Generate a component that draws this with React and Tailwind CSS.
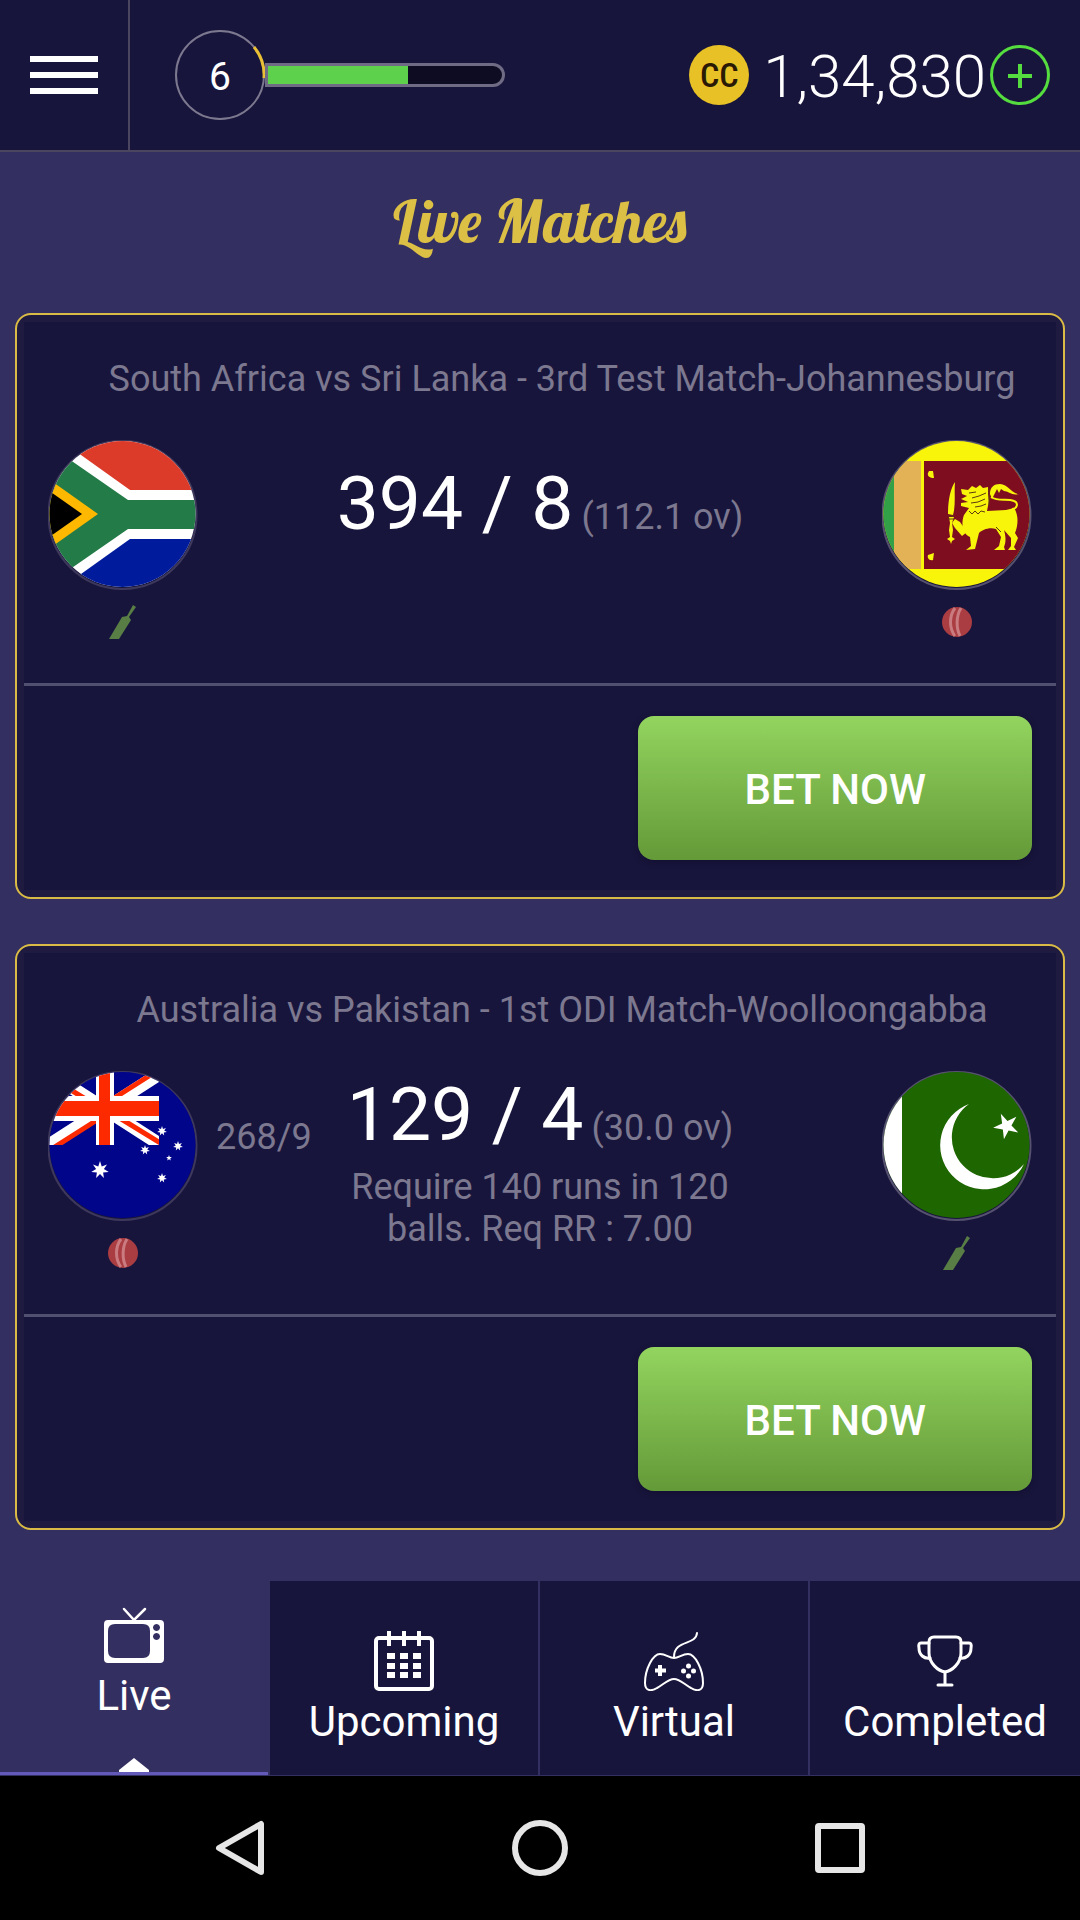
import React from "react";

function starPoints(cx, cy, outer, inner, count, startDeg) {
  const pts = [];
  for (let i = 0; i < count * 2; i++) {
    const r = i % 2 === 0 ? outer : inner;
    const a = ((startDeg + (i * 180) / count) * Math.PI) / 180;
    pts.push(`${(cx + r * Math.cos(a)).toFixed(2)},${(cy + r * Math.sin(a)).toFixed(2)}`);
  }
  return pts.join(" ");
}

function FlagDisc({ id, label, ring, children }) {
  return (
    <svg viewBox="0 0 150 150" className="h-[150px] w-[150px]" role="img" aria-label={label}>
      <defs>
        <clipPath id={id}>
          <circle cx="74.500" cy="74" r="73" />
        </clipPath>
      </defs>
      <circle cx="74.500" cy="75" r="74" fill="#18153c" stroke={ring} strokeWidth="2" />
      <g clipPath={`url(#${id})`}>{children}</g>
    </svg>
  );
}

function SouthAfrica() {
  return (
    <FlagDisc id="flag-sa" label="South Africa" ring="#3d385c">
      <rect width="150" height="150" fill="#fff" />
      <path d="M12 0 L82 50 H150 V0 Z" fill="#dd3b2a" />
      <path d="M12 149 L82 99 H150 V150 H12 Z" fill="#001c9c" />
      <path d="M0 4.500 L80 60 H150 V89 H80 L0 144.500 Z" fill="#237b48" />
      <path d="M0 38.500 L50 74 L0 109.500 Z" fill="#ffb800" />
      <path d="M0 50 L34 74 L0 98 Z" fill="#000" />
    </FlagDisc>
  );
}

function SriLanka() {
  return (
    <FlagDisc id="flag-sl" label="Sri Lanka" ring="#55516e">
      <rect width="150" height="150" fill="#f8f50a" />
      <rect x="0" y="21" width="12" height="108" fill="#31a046" />
      <rect x="12" y="21" width="27" height="108" fill="#e3b257" />
      <rect x="42" y="21" width="108" height="108" fill="#7f0d20" />
      <g fill="#f8f50a">
        <path d="M47 31 L51 31 L52 38 C48 38 45 36 46 33 Z" />
        <path d="M46 115 L52 113 L51 120 C47 121 45 118 46 115 Z" />
        <path d="M73 42 C68 49 66 62 66 74 L71 75 C74 65 72 52 73 42 Z" />
        <path d="M67 77 H72 L70 83 L71 90 L70 97 L73 99 L70 101 L69 104 L68 101 L65 99 L68 97 L67 90 L68 83 Z" />
        <path d="M73 79 L78 82 L85 92 L80 96 L73 88 L70 83 Z" />
        <path d="M79 49 L86 50 L90 46 L94 48 L98 45 L101 48 L106 47 L106 54 L107 61 L105 71 L124 70 L132 68 C137 75 136 86 133 93 L136 98 L132 107 L134 110 H126 L129 106 V98 L122 90 C124 97 124 102 122 107 L123 110 H112 L117 106 L119 97 L114 89 C107 87 100 90 97 93 L93 109 L84 110 L89 106 L88 97 C80 94 79 83 82 75 L87 68 L79 66 L79 63 L86 62 L79 59 L85 56 L80 54 Z" />
      </g>
      <path d="M108 54 C108 47 112 44 118 44 C126 44 130 54 137 54 C130 56 126 51 122 51 L119 49 L117 53 L115 49 L112 55 L110 59 Z" fill="#f8f50a" />
      <path d="M109 57 C117 62 125 58 132 61 C137 63 135 69 130 69" fill="none" stroke="#f8f50a" strokeWidth="2" />
      <path d="M87 53 L94 52 M90 58 L97 56 L104 53 M89 63 L96 62 L103 59 M93 67 L99 66 L104 64 M87 71 L90 74 L93 71 L96 74 L99 71 L103 72 M114 87 L119 92 M66 76 H72 M66 79 H72 M107 48 V66" fill="none" stroke="#5d3a12" strokeWidth="1" />
    </FlagDisc>
  );
}

function Australia() {
  return (
    <FlagDisc id="flag-au" label="Australia" ring="#3d385c">
      <defs>
        <clipPath id="canton">
          <rect x="0" y="0" width="111" height="74" />
        </clipPath>
      </defs>
      <rect width="150" height="150" fill="#00058a" />
      <g clipPath="url(#canton)">
        <path d="M-2 0 L116 76 M-2 76 L116 0" stroke="#fff" strokeWidth="13" />
        <path d="M0 5 L57 40 M57 38 L114 73 M2 79 L60 42 M57 33 L112 -2" stroke="#fd2a00" strokeWidth="5" />
        <rect x="48" y="0" width="18" height="74" fill="#fff" />
        <rect x="0" y="25" width="111" height="25" fill="#fff" />
        <rect x="51" y="0" width="11" height="74" fill="#fd2a00" />
        <rect x="0" y="30" width="111" height="15" fill="#fd2a00" />
      </g>
      <g fill="#fff">
        <polygon points={starPoints(52, 99, 9, 4, 7, -90)} />
        <polygon points={starPoints(114, 60, 5, 2.3, 7, -90)} />
        <polygon points={starPoints(130, 75, 5, 2.3, 7, -90)} />
        <polygon points={starPoints(97, 79, 5, 2.3, 7, -90)} />
        <polygon points={starPoints(114, 107, 5, 2.3, 7, -90)} />
        <polygon points={starPoints(121, 87, 3, 1.3, 5, -90)} />
      </g>
    </FlagDisc>
  );
}

function Pakistan() {
  return (
    <FlagDisc id="flag-pk" label="Pakistan" ring="#55516e">
      <rect width="150" height="150" fill="#1e6600" />
      <rect width="20" height="150" fill="#fff" />
      <path d="M87 33 A44 44 0 1 0 142 93 A41 41 0 1 1 87 33 Z" fill="#fff" />
      <polygon points={starPoints(124.5, 55, 13.5, 5, 5, -115)} fill="#fff" />
    </FlagDisc>
  );
}

function Bat() {
  return (
    <svg viewBox="0 0 28 34" className="h-[34px] w-7" role="img" aria-label="Batting">
      <path d="M24 0 L27 2 L20 12 L22 15 L10 34 H0 L13 12 L18 11 Z" fill="#587d45" />
    </svg>
  );
}

function Ball() {
  return (
    <svg viewBox="0 0 30 30" className="h-[30px] w-[30px]" role="img" aria-label="Bowling">
      <circle cx="15" cy="15" r="15" fill="#aa3d42" />
      <path d="M13 1 C7 9 7 21 13 29 M19 1 C14 9 14 21 18 29" fill="none" stroke="#c97b7f" strokeWidth="3" />
      <path d="M16 1 C10 9 10 21 15 29" fill="none" stroke="#aa3d42" strokeWidth="1" />
    </svg>
  );
}

function Team({ flag, role }) {
  return (
    <div className="flex flex-col items-center">
      {flag}
      <div className="mt-3 flex h-10 items-center justify-center">{role}</div>
    </div>
  );
}

function MatchCard({ title, home, away, previous, score, overs, note }) {
  return (
    <article className="rounded-2xl border-2 border-[#d9bb45] bg-[#1f1a40] p-[7px]">
      <div className="bg-[#18153c] pt-9 pb-[30px]">
        <h2 className="pl-11 text-center text-[36px] leading-[42px] text-[#7c788f]">{title}</h2>
        <div className="mt-10 grid grid-cols-[150px_1fr_420px_1fr_150px] px-6">
          <Team flag={home.flag} role={home.role} />
          <div className="mt-[45px] pl-[18px] text-[36px] leading-[42px] text-[#7c788f]">{previous}</div>
          <div className={note ? "text-center" : "pt-5 text-center"}>
            <p className="flex items-baseline justify-center gap-2 whitespace-nowrap">
              <span className="text-[75px] leading-[86px] text-white">{score}</span>
              <span className="text-[36px] leading-[42px] text-[#7c788f]">{overs}</span>
            </p>
            {note && <p className="mt-[9px] px-2 text-[36px] leading-[42px] text-[#7c788f]">{note}</p>}
          </div>
          <div />
          <Team flag={away.flag} role={away.role} />
        </div>
        <div className="mt-[41px] flex justify-end border-t-[3px] border-[#525070] px-6 pt-[30px]">
          <button
            type="button"
            className="h-36 w-2/5 rounded-2xl bg-linear-to-b from-[#93d45f] to-[#649a38] pt-0.5 text-[42px] font-medium text-white shadow-[0_2px_6px_rgba(10,8,35,0.4)]"
          >
            BET NOW
          </button>
        </div>
      </div>
    </article>
  );
}

function TvIcon() {
  return (
    <svg viewBox="0 0 60 60" className="h-[60px] w-[60px]" aria-hidden="true">
      <path d="M20 4 L30 15 L41 4" fill="none" stroke="#fff" strokeWidth="2.500" strokeLinecap="round" />
      <path
        fillRule="evenodd"
        fill="#fff"
        d="M4 15 H56 Q60 15 60 19 V54 Q60 58 56 58 H4 Q0 58 0 54 V19 Q0 15 4 15 Z M11 19 Q4 19 4 26 V46 Q4 53 11 53 H39 Q46 53 46 46 V26 Q46 19 39 19 Z M52.500 19 a3.500 3.500 0 1 0 0.010 0 Z M52.500 28 a3.500 3.500 0 1 0 0.010 0 Z"
      />
    </svg>
  );
}

function CalendarIcon() {
  return (
    <svg viewBox="0 0 60 60" className="h-[60px] w-[60px]" aria-hidden="true">
      <rect x="2" y="7" width="56" height="51" rx="3" fill="none" stroke="#fff" strokeWidth="4" />
      <path d="M15 0 V15 M30 0 V15 M45 0 V15" stroke="#fff" strokeWidth="4" />
      {[22, 32, 41].map((y) =>
        [13, 26, 39].map((x) => <rect key={`${x}-${y}`} x={x} y={y} width="8" height="6" fill="#fff" />)
      )}
    </svg>
  );
}

function GamepadIcon() {
  return (
    <svg viewBox="0 0 60 60" className="h-[60px] w-[60px]" aria-hidden="true">
      <g fill="none" stroke="#fff" strokeWidth="2" strokeLinecap="round">
        <path d="M30 26 C30 8 52 15 53 2" />
        <path d="M30 27 C35 27 38 23 44 23 C51 23 59 38 59 52 C59 61 52 60 47 57 C41 54 36 48 30 48 C24 48 19 54 13 57 C8 60 1 61 1 52 C1 38 9 23 16 23 C22 23 25 27 30 27 Z" />
      </g>
      <path d="M16 34 V45 M11 39.500 H22" stroke="#fff" strokeWidth="4" />
      <g fill="#fff">
        <circle cx="44.500" cy="35" r="2.500" />
        <circle cx="44.500" cy="45" r="2.500" />
        <circle cx="39.500" cy="40" r="2.500" />
        <circle cx="49.500" cy="40" r="2.500" />
      </g>
    </svg>
  );
}

function TrophyIcon() {
  return (
    <svg viewBox="0 0 60 60" className="h-[60px] w-[60px]" aria-hidden="true">
      <g fill="none" stroke="#fff" strokeWidth="3" strokeLinecap="round">
        <path d="M19 6 H41 Q46 6 46 11 V22 C46 32 37 40 30 41 C23 40 14 32 14 22 V11 Q14 6 19 6 Z" />
        <path d="M14 12 H6 Q3 12 4 17 C4 24 9 28 15 27" />
        <path d="M46 12 H54 Q57 12 56 17 C56 24 51 28 45 27" />
        <path d="M30 41 V54 M23 54 H37" />
      </g>
    </svg>
  );
}

const tabs = [
  { label: "Live", icon: <TvIcon />, active: true },
  { label: "Upcoming", icon: <CalendarIcon /> },
  { label: "Virtual", icon: <GamepadIcon /> },
  { label: "Completed", icon: <TrophyIcon /> },
];

function Tab({ label, icon, active }) {
  const base =
    "relative flex h-full flex-col items-center gap-[7px] border-r-2 border-[#342f61] text-[42px] leading-[48px] text-white last:border-r-0";
  return (
    <button type="button" aria-current={active ? "page" : undefined} className={active ? `${base} bg-[#342f61] pt-6` : `${base} bg-[#18153c] pt-[50px]`}>
      {icon}
      <span>{label}</span>
      {active && (
        <span className="absolute inset-x-0 bottom-0 flex flex-col items-center">
          <svg viewBox="0 0 30 14" className="h-3.5 w-[30px]" aria-hidden="true">
            <path d="M15 0 L30 12 V14 H0 V12 Z" fill="#fff" />
          </svg>
          <span className="h-[3px] w-full bg-[#6259b8]" />
        </span>
      )}
    </button>
  );
}

const levelProgress = 60;

export default function App() {
  return (
    <div className="flex min-h-screen flex-col bg-[#342f61] font-['Roboto',sans-serif]">
      <header className="flex h-[152px] items-stretch border-b-2 border-[#4c4560] bg-[#18153c]">
        <button type="button" aria-label="Menu" className="flex w-[130px] flex-col items-center justify-center gap-2.5 border-r-2 border-[#4c4560]">
          <span className="h-1.5 w-[68px] bg-white" />
          <span className="h-1.5 w-[68px] bg-white" />
          <span className="h-1.5 w-[68px] bg-white" />
        </button>
        <div className="flex flex-1 items-center pr-[30px] pl-[45px]">
          <div className="relative flex h-[90px] w-[90px] items-center justify-center pt-1 text-[39px] text-white">
            <svg viewBox="0 0 90 90" className="absolute inset-0 h-full w-full" aria-hidden="true">
              <circle cx="45" cy="45" r="44" fill="none" stroke="#7c788f" strokeWidth="2" />
              <path d="M79 17 A44 44 0 0 1 89 48" fill="none" stroke="#e8bf35" strokeWidth="3" />
            </svg>
            <span>6</span>
          </div>
          <div
            role="progressbar"
            aria-label="Level progress"
            aria-valuenow={levelProgress}
            aria-valuemin={0}
            aria-valuemax={100}
            className="h-6 w-60 overflow-hidden rounded-r-full border-3 border-[#6f6b84] bg-[#0d0c22]"
          >
            <div className="h-full bg-[#5dd14b]" style={{ width: `${levelProgress}%` }} />
          </div>
          <div className="ml-auto flex items-center">
            <span className="flex h-[60px] w-[60px] items-center justify-center rounded-full bg-[#e8c126] font-['Roboto_Condensed','Roboto',sans-serif] text-[34px] font-medium text-[#2a1a05]">
              CC
            </span>
            <span className="ml-3.5 pt-1 text-[60px] leading-[70px] font-light text-white">1,34,830</span>
            <button type="button" aria-label="Add coins" className="ml-1 flex h-[60px] w-[60px] items-center justify-center rounded-full border-3 border-[#55dd3f] pt-0.5">
              <svg viewBox="0 0 24 24" className="h-6 w-6" aria-hidden="true">
                <path d="M12 0 V24 M0 12 H24" stroke="#55dd3f" strokeWidth="4" />
              </svg>
            </button>
          </div>
        </div>
      </header>

      <main className="flex-1 px-[15px] pb-12">
        <h1 className="flex h-[161px] items-center justify-center pb-6 font-['Lobster_Two','Lobster','Liberation_Serif',cursive] text-[60px] leading-[75px] font-bold text-[#dcbf45] italic">
          Live Matches
        </h1>
        <div className="flex flex-col gap-[45px]">
          <MatchCard
            title="South Africa vs Sri Lanka - 3rd Test Match-Johannesburg"
            home={{ flag: <SouthAfrica />, role: <Bat /> }}
            away={{ flag: <SriLanka />, role: <Ball /> }}
            score="394 / 8"
            overs="(112.1 ov)"
          />
          <MatchCard
            title="Australia vs Pakistan - 1st ODI Match-Woolloongabba"
            home={{ flag: <Australia />, role: <Ball /> }}
            away={{ flag: <Pakistan />, role: <Bat /> }}
            previous="268/9"
            score="129 / 4"
            overs="(30.0 ov)"
            note="Require 140 runs in 120 balls. Req RR : 7.00"
          />
        </div>
      </main>

      <nav aria-label="Match sections" className="grid h-[195px] grid-cols-4 border-b border-[#342f61]">
        {tabs.map((t) => (
          <Tab key={t.label} {...t} />
        ))}
      </nav>

      <nav aria-label="System" className="grid h-36 grid-cols-3 items-center justify-items-center bg-black px-[90px]">
        <button type="button" aria-label="Back">
          <svg viewBox="0 0 56 56" className="h-14 w-14" aria-hidden="true">
            <path d="M49 4 V52 L7 28 Z" fill="none" stroke="#e6e6e6" strokeWidth="6" strokeLinejoin="round" />
          </svg>
        </button>
        <button type="button" aria-label="Home">
          <svg viewBox="0 0 56 56" className="h-14 w-14" aria-hidden="true">
            <circle cx="28" cy="28" r="25" fill="none" stroke="#e6e6e6" strokeWidth="6" />
          </svg>
        </button>
        <button type="button" aria-label="Recent apps">
          <svg viewBox="0 0 56 56" className="h-14 w-14" aria-hidden="true">
            <rect x="6" y="6" width="44" height="44" rx="1" fill="none" stroke="#e6e6e6" strokeWidth="6" strokeLinejoin="round" />
          </svg>
        </button>
      </nav>
    </div>
  );
}
